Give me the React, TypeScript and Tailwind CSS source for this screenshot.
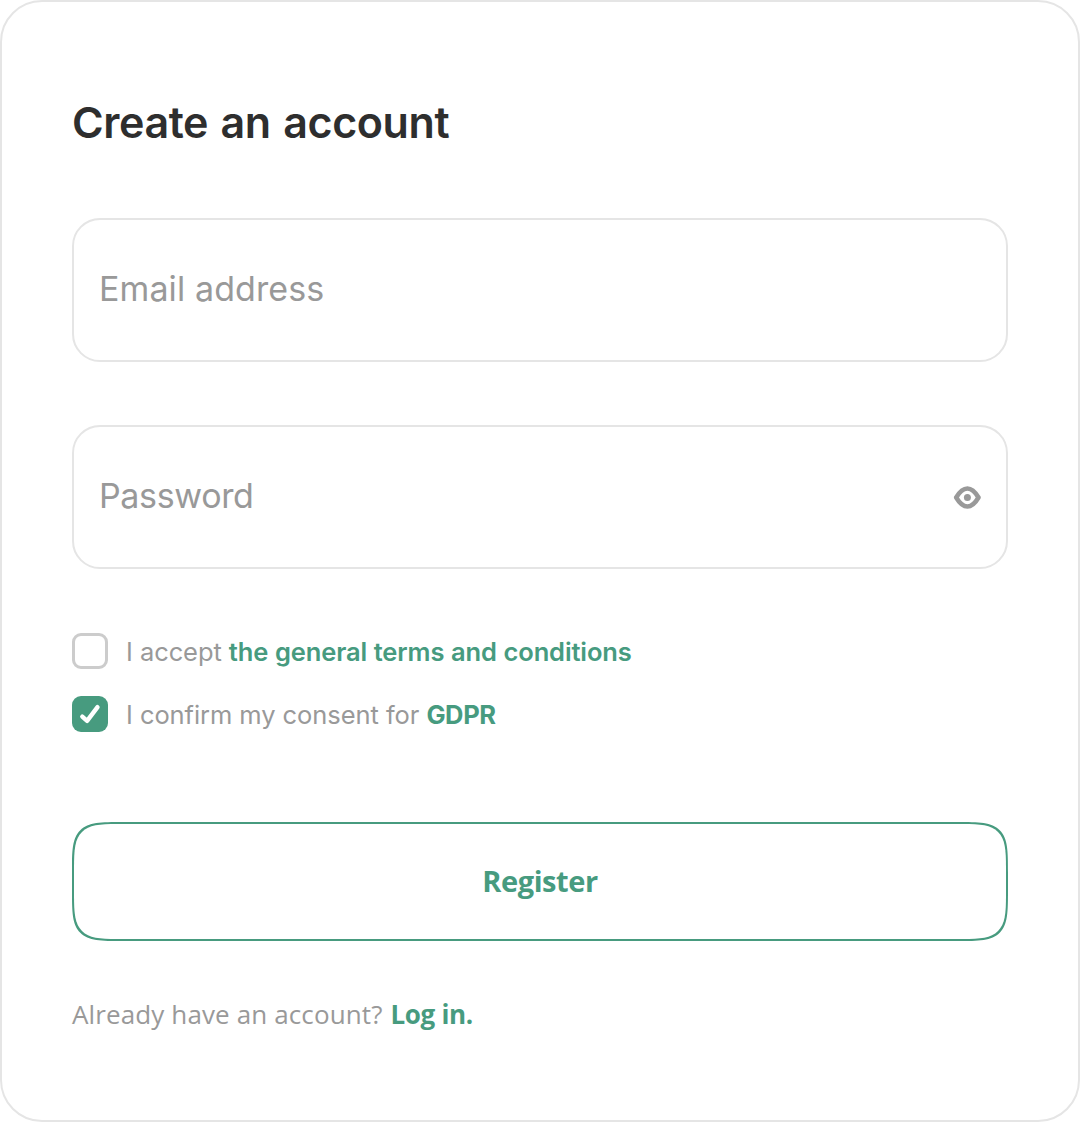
import React, { useState } from "react";

const EyeIcon: React.FC = () => (
    <svg width="28" height="24" viewBox="0 0 28 24" fill="none">
        <path
            d="M3.2 12.5C5.8 8.1 9.8 3.5 14.4 3.5C19 3.5 22.9 8.1 25.5 12.5C22.9 16.9 19 21.5 14.4 21.5C9.8 21.5 5.8 16.9 3.2 12.5Z"
            stroke="#999999"
            strokeWidth="4.6"
            strokeLinejoin="round"
        />
        <circle cx="14.4" cy="12.5" r="3.5" fill="#999999" />
    </svg>
);

const CheckIcon: React.FC = () => (
    <svg width="36" height="36" viewBox="0 0 36 36" fill="none">
        <path d="M10.3 20.6L15.1 24.9L25.5 11.2" stroke="#ffffff" strokeWidth="4.4" strokeLinecap="round" strokeLinejoin="round" />
    </svg>
);

interface CheckboxProps {
    checked: boolean;
    onToggle: () => void;
    children: React.ReactNode;
}

const Checkbox: React.FC<CheckboxProps> = ({ checked, onToggle, children }) => (
    <div className="flex items-center h-9">
        <button
            type="button"
            role="checkbox"
            aria-checked={checked}
            onClick={onToggle}
            className={`w-9 h-9 shrink-0 rounded-[9px] ${checked ? "bg-[#479b7f]" : "bg-white border-3 border-[#cccccc]"}`}
        >
            {checked && <CheckIcon />}
        </button>
        <div className="ml-[18px] pt-px text-[25.5px] leading-9 tracking-[-0.07px] whitespace-nowrap text-[#999999]">{children}</div>
    </div>
);

const App: React.FC = () => {
    const [terms, setTerms] = useState(false);
    const [gdpr, setGdpr] = useState(true);
    const [showPassword, setShowPassword] = useState(false);

    return (
        <div className="w-full h-[1122px] bg-white border-2 border-[#e5e5e5] rounded-[42px] px-[70px] pt-[90px] flex flex-col font-['Inter',sans-serif]">
            <h1 className="text-[43px] leading-[60px] font-semibold tracking-[-0.4px] [word-spacing:2px] text-[#2e2e2e]">Create an account</h1>

            <div className="mt-[66px] h-36 shrink-0 flex items-center border-2 border-[#e5e5e5] rounded-[28px] pl-[25px] pr-6">
                <input
                    type="email"
                    placeholder="Email address"
                    className="w-full pb-[2px] text-[34px] leading-[48px] tracking-[0.1px] outline-none placeholder:text-[#999999]"
                />
            </div>

            <div className="mt-[63px] h-36 shrink-0 flex items-center border-2 border-[#e5e5e5] rounded-[28px] pl-[25px] pr-[25px]">
                <input
                    type={showPassword ? "text" : "password"}
                    placeholder="Password"
                    className="flex-1 pb-[2px] text-[34px] leading-[48px] tracking-[-0.35px] outline-none placeholder:text-[#999999]"
                />
                <button type="button" aria-label="Show password" onClick={() => setShowPassword(!showPassword)}>
                    <EyeIcon />
                </button>
            </div>

            <div className="mt-[64px] flex flex-col gap-[27px]">
                <Checkbox checked={terms} onToggle={() => setTerms(!terms)}>
                    I accept{" "}
                    <a href="#" className="font-semibold tracking-[-0.12px] [word-spacing:0.4px] text-[#479b7f]">
                        the general terms and conditions
                    </a>
                </Checkbox>
                <Checkbox checked={gdpr} onToggle={() => setGdpr(!gdpr)}>
                    I confirm my consent for{" "}
                    <a href="#" className="font-bold tracking-[-0.4px] text-[#479b7f]">
                        GDPR
                    </a>
                </Checkbox>
            </div>

            <button
                type="button"
                className="mt-[90px] h-[119px] shrink-0 pb-[2px] border-2 border-[#479b7f] rounded-[52px] [corner-shape:squircle] font-['Open_Sans',sans-serif] font-bold text-[29px] tracking-[-0.4px] text-[#479b7f]"
            >
                Register
            </button>

            <p className="mt-[55px] font-['Open_Sans',sans-serif] text-[26px] leading-9 tracking-[0.12px] text-[#999999]">
                Already have an account?{" "}
                <a href="#" className="ml-px font-bold tracking-[-0.3px] text-[#479b7f]">
                    Log in.
                </a>
            </p>
        </div>
    );
};

export default App;
